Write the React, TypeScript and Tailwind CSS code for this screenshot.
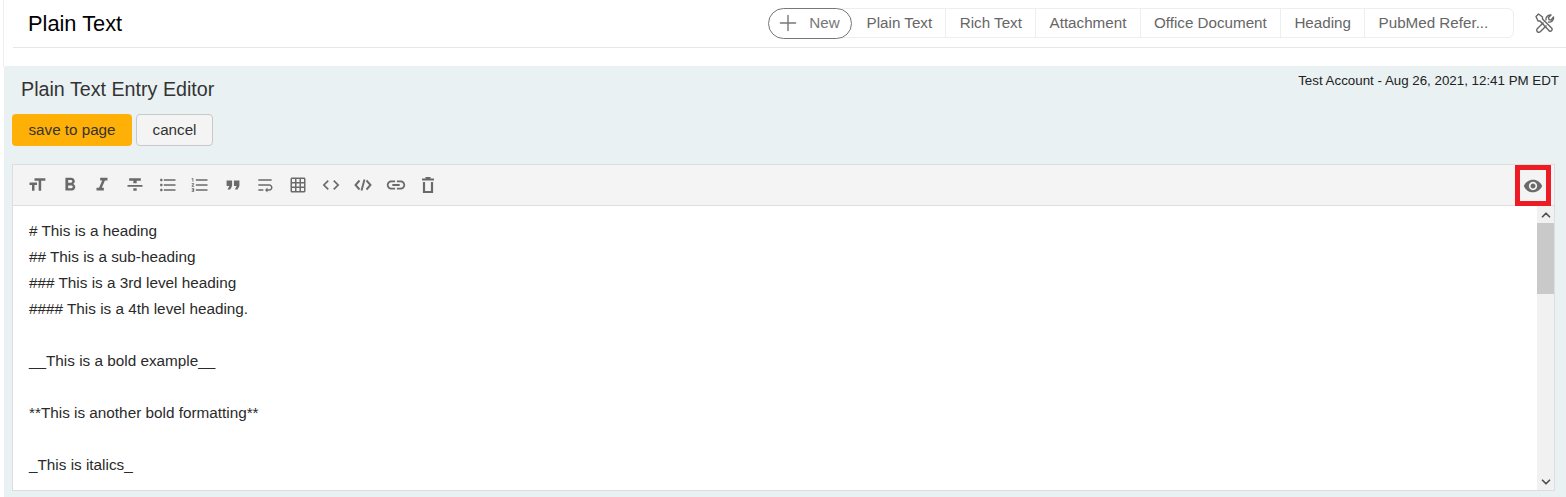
import { Plus, ChevronUp, ChevronDown } from "lucide-react";
import {
  MdFormatSize,
  MdFormatBold,
  MdFormatItalic,
  MdFormatStrikethrough,
  MdFormatListBulleted,
  MdFormatListNumbered,
  MdFormatQuote,
  MdWrapText,
  MdGridOn,
  MdCode,
  MdLink,
  MdVisibility,
} from "react-icons/md";

const tabs = ["Plain Text", "Rich Text", "Attachment", "Office Document", "Heading", "PubMed Refer..."];

const lines = [
  "# This is a heading",
  "## This is a sub-heading",
  "### This is a 3rd level heading",
  "#### This is a 4th level heading.",
  "",
  "__This is a bold example__",
  "",
  "**This is another bold formatting**",
  "",
  "_This is italics_",
  "",
];

function CodeTag() {
  return (
    <svg width="18" height="18" viewBox="0 0 18 18" fill="none" stroke="currentColor" strokeWidth="1.9">
      <path d="M5.5 4.5 1.5 9l4 4.5M12.5 4.5l4 4.5-4 4.5M10.5 3.5l-3 11" />
    </svg>
  );
}

function Trash() {
  return (
    <svg width="18" height="18" viewBox="0 0 18 18" fill="none" stroke="currentColor" strokeWidth="2.2">
      <path d="M3 3.5h12M6.5 2h5M5 6v10h8V6" />
    </svg>
  );
}

function Tools() {
  return (
    <svg width="22" height="22" viewBox="0 0 22 22" fill="none" stroke="#666" strokeWidth="1.4" strokeLinejoin="round">
      <path d="M2 4.5 4.5 2l4 3v2l9.5 9.5a2 2 0 0 1-2.6 2.6L6 9H4z" />
      <path d="M9.5 10.5 3 17a2.2 2.2 0 0 0 3 3l6.5-6.5" />
      <path d="M12 8.5c-.8-3 1.8-6 5-5.5l-2.5 2.6.5 2 2 .5L19.5 5c.8 3-2.2 5.8-5.5 5" />
    </svg>
  );
}

const tools = [
  <MdFormatSize size={20} />,
  <MdFormatBold size={22} />,
  <MdFormatItalic size={22} />,
  <MdFormatStrikethrough size={20} />,
  <MdFormatListBulleted size={20} />,
  <MdFormatListNumbered size={20} />,
  <MdFormatQuote size={22} />,
  <MdWrapText size={20} />,
  <MdGridOn size={18} />,
  <MdCode size={20} />,
  <CodeTag />,
  <MdLink size={22} />,
  <Trash />,
];

export default function App() {
  return (
    <div className="h-[497px] overflow-hidden bg-white font-['Liberation_Sans',Arial,sans-serif] text-[#333]">
      {/* Header */}
      <div className="h-[66px] border-l border-[#eeeeee] ml-[3px]">
        <div className="ml-[9px] h-[48px] border-b border-[#e6e6e6] flex items-center">
          <h1 className="ml-[15px] pt-[1px] text-[21.8px] text-black">Plain Text</h1>
          <div className="ml-auto flex items-center h-[30px] mt-[-1px]">
            <div className="relative z-10 flex items-center h-[31px] w-[84px] rounded-full border border-[#777] bg-white text-[#777] pl-[6px] text-[15.2px]">
              <Plus size={26} strokeWidth={1.3} className="mr-[8px] shrink-0" />
              New
            </div>
            <div className="flex h-[30px] ml-[-10px] pl-[10px] items-center border border-[#eeeeee] rounded-r-md text-[15.2px] text-[#666]">
              {tabs.map((tab) => (
                <div key={tab} className="flex h-full items-center px-[13.3px] border-l border-[#eeeeee] first:border-l-0 whitespace-nowrap">
                  {tab}
                </div>
              ))}
              <div className="w-[11.4px]" />
            </div>
            <div className="ml-[20px] mr-[10px] w-[22px] flex justify-center">
              <Tools />
            </div>
          </div>
        </div>
      </div>

      {/* Editor panel */}
      <div className="ml-[4px] h-[431px] bg-[#e9f1f3] relative">
        <div className="absolute right-[7px] top-[7px] text-[13.33px] leading-[16px] text-[#222] whitespace-nowrap">Test Account - Aug 26, 2021, 12:41 PM EDT</div>
        <h2 className="pl-[17px] pt-[10px] text-[19.7px] leading-[26px]">Plain Text Entry Editor</h2>
        <div className="flex gap-1 ml-[8px] mt-[12px]">
          <button className="h-[32px] w-[120px] rounded bg-[#ffb006] text-[15.2px] text-[#333]">save to page</button>
          <button className="h-[32px] w-[77px] rounded border border-[#c8c8c8] bg-[#f4f4f4] text-[15.2px] text-[#333]">cancel</button>
        </div>

        <div className="ml-[8px] mr-[11px] mt-[18px] h-[327px] border border-[#dddddd] bg-white flex flex-col">
          <div className="relative h-[41px] shrink-0 bg-[#f4f4f4] border-b border-[#dddddd] flex items-center pl-[8px] text-[#6a6a6a]">
            {tools.map((icon, i) => (
              <div key={i} className="w-[32.6px] flex justify-center items-center">
                {icon}
              </div>
            ))}
            <div className="absolute right-[3px] top-0 h-[41px] w-[36px] border-[5px] border-[#ed1c24] flex items-center justify-center">
              <MdVisibility size={20} />
            </div>
          </div>
          <div className="flex flex-1 min-h-0">
            <div className="flex-1 overflow-hidden pl-[16px] pt-[12px] text-[15.3px] leading-[26px] text-[#2a2a2a]">
              {lines.map((line, i) => (
                <div key={i} className="h-[26px] whitespace-pre">
                  {line}
                </div>
              ))}
            </div>
            <div className="w-[17px] shrink-0 bg-[#f1f1f1] flex flex-col items-center">
              <div className="h-[17px] flex items-center">
                <ChevronUp size={14} strokeWidth={3} className="text-[#505050]" />
              </div>
              <div className="h-[71px] w-full bg-[#c9c9c9]" />
              <div className="mt-auto h-[17px] flex items-center">
                <ChevronDown size={14} strokeWidth={3} className="text-[#505050]" />
              </div>
            </div>
          </div>
        </div>
      </div>
    </div>
  );
}
